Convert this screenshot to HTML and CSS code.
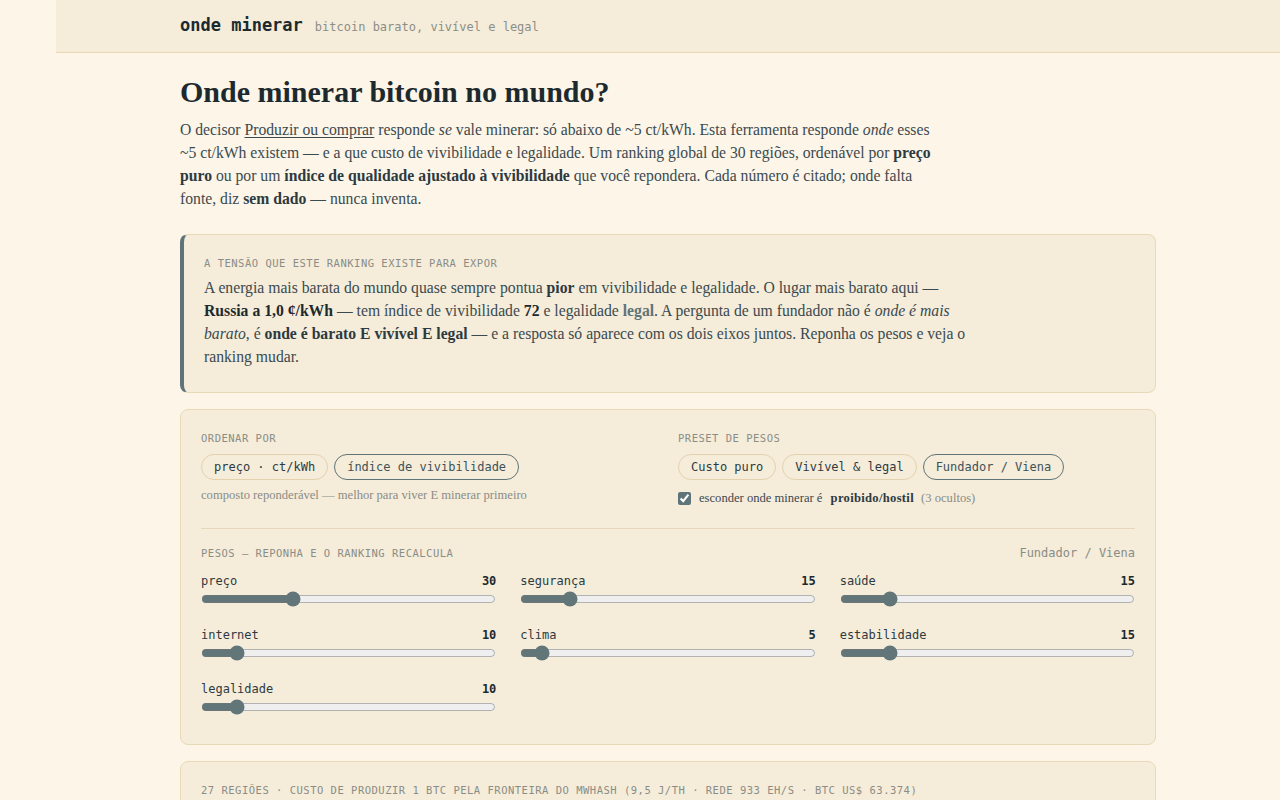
FILE: index.html
```html
<!DOCTYPE html>
<html lang="pt">
<head>
<meta charset="utf-8">
<title>onde minerar</title>
<link rel="stylesheet" href="styles.css">
</head>
<body>
<div class="shell">
  <div class="rail"></div>
  <div class="main">
    <header class="topbar">
      <div class="wrap topbar-inner">
        <span class="brand">onde minerar</span>
        <span class="tagline">bitcoin barato, vivível e legal</span>
      </div>
    </header>
    <main class="wrap content">
      <h1 class="title">Onde minerar bitcoin no mundo?</h1>
      <p class="lede">O decisor <a class="link" href="#">Produzir ou comprar</a> responde <em>se</em> vale minerar: só abaixo de ~5 ct/kWh. Esta ferramenta responde <em>onde</em> esses ~5 ct/kWh existem — e a que custo de vivibilidade e legalidade. Um ranking global de 30 regiões, ordenável por <strong>preço puro</strong> ou por um <strong>índice de qualidade ajustado à vivibilidade</strong> que você repondera. Cada número é citado; onde falta fonte, diz <strong>sem dado</strong> — nunca inventa.</p>

      <section class="callout">
        <div class="eyebrow">A tensão que este ranking existe para expor</div>
        <p class="callout-text">A energia mais barata do mundo quase sempre pontua <strong>pior</strong> em vivibilidade e legalidade. O lugar mais barato aqui — <strong class="ink">Russia a 1,0 ¢/kWh</strong> — tem índice de vivibilidade <strong class="ink">72</strong> e legalidade <strong class="slate">legal</strong>. A pergunta de um fundador não é <em>onde é mais barato</em>, é <strong>onde é barato E vivível E legal</strong> — e a resposta só aparece com os dois eixos juntos. Reponha os pesos e veja o ranking mudar.</p>
      </section>

      <section class="panel controls">
        <div class="ctrl-grid">
          <div class="ctrl-col">
            <div class="eyebrow">Ordenar por</div>
            <div class="pills">
              <button class="pill">preço · ct/kWh</button>
              <button class="pill active">índice de vivibilidade</button>
            </div>
            <div class="hint">composto reponderável — melhor para viver E minerar primeiro</div>
          </div>
          <div class="ctrl-col">
            <div class="eyebrow">Preset de pesos</div>
            <div class="pills">
              <button class="pill">Custo puro</button>
              <button class="pill">Vivível &amp; legal</button>
              <button class="pill active">Fundador / Viena</button>
            </div>
            <label class="check">
              <input type="checkbox" checked>
              <span>esconder onde minerar é <strong>proibido/hostil</strong> <span class="muted">(3 ocultos)</span></span>
            </label>
          </div>
        </div>
        <div class="divider"></div>
        <div class="weights-head">
          <div class="eyebrow">Pesos — reponha e o ranking recalcula</div>
          <div class="preset-name">Fundador / Viena</div>
        </div>
        <div class="sliders">
          <div class="slider"><div class="slider-top"><span>preço</span><b>30</b></div><input type="range" min="0" max="100" value="30"></div>
          <div class="slider"><div class="slider-top"><span>segurança</span><b>15</b></div><input type="range" min="0" max="100" value="15"></div>
          <div class="slider"><div class="slider-top"><span>saúde</span><b>15</b></div><input type="range" min="0" max="100" value="15"></div>
          <div class="slider"><div class="slider-top"><span>internet</span><b>10</b></div><input type="range" min="0" max="100" value="10"></div>
          <div class="slider"><div class="slider-top"><span>clima</span><b>5</b></div><input type="range" min="0" max="100" value="5"></div>
          <div class="slider"><div class="slider-top"><span>estabilidade</span><b>15</b></div><input type="range" min="0" max="100" value="15"></div>
          <div class="slider"><div class="slider-top"><span>legalidade</span><b>10</b></div><input type="range" min="0" max="100" value="10"></div>
        </div>
      </section>

      <section class="panel results">
        <div class="eyebrow">27 regiões · custo de produzir 1 BTC pela fronteira do MWHash (9,5 J/TH · rede 933 EH/s · BTC US$ 63.374)</div>
        <div class="results-body"></div>
      </section>
    </main>
  </div>
</div>
</body>
</html>
```

FILE: styles.css
```css
* { box-sizing: border-box; }
html, body { margin: 0; padding: 0; }
body {
  background: #fdf5e8;
  color: #3b4a4f;
  font-family: "Liberation Serif", "DejaVu Serif", serif;
}
.shell { display: flex; min-height: 100vh; }
.rail { width: 56px; flex: none; }
.main { flex: 1; min-width: 0; }
.wrap { width: 976px; margin: 0 auto; }

.topbar {
  background: #f5ecda;
  border-bottom: 1px solid #ead7b3;
  height: 53px;
}
.topbar-inner {
  display: flex;
  align-items: baseline;
  gap: 12px;
  padding-top: 15px;
}
.brand {
  font-family: "DejaVu Sans Mono", "Liberation Mono", monospace;
  font-weight: bold;
  font-size: 17px;
  color: #1c2a2f;
}
.tagline {
  font-family: "DejaVu Sans Mono", "Liberation Mono", monospace;
  font-size: 12px;
  color: #8c8f88;
}

.content { padding-top: 21px; }
.title {
  margin: 0;
  font-size: 30px;
  line-height: 36px;
  font-weight: bold;
  color: #1c2a2f;
}
.lede {
  margin: 8px 0 0;
  max-width: 760px;
  font-size: 15.7px;
  line-height: 23px;
}
.lede strong { color: #2d3a3f; }
.link { color: inherit; text-decoration: underline; text-underline-offset: 2px; }

.eyebrow {
  font-family: "DejaVu Sans Mono", "Liberation Mono", monospace;
  font-size: 10.5px;
  letter-spacing: 0.5px;
  text-transform: uppercase;
  color: #8a8c86;
  line-height: 14px;
}

.callout {
  margin-top: 24px;
  background: #f5ecda;
  border: 1px solid #ead9b9;
  border-left: 4px solid #5f7478;
  border-radius: 8px;
  padding: 21px 20px 24px;
}
.callout-text {
  margin: 6px 0 0;
  max-width: 770px;
  font-size: 15.7px;
  line-height: 23px;
}
.callout-text strong { color: #2d3a3f; }
.callout-text .ink { color: #1c2a2f; }
.callout-text .slate { color: #5f7478; }

.panel {
  background: #f5ecda;
  border: 1px solid #ead9b9;
  border-radius: 8px;
  padding: 21px 20px;
}
.controls { margin-top: 16px; padding-bottom: 26px; }
.ctrl-grid {
  display: grid;
  grid-template-columns: 1fr 1fr;
  gap: 20px;
}
.pills { display: flex; gap: 6px; margin-top: 9px; }
.pill {
  height: 26px;
  padding: 0 12px;
  border-radius: 13px;
  border: 1px solid #e4d2ae;
  background: transparent;
  font-family: "DejaVu Sans Mono", "Liberation Mono", monospace;
  font-size: 12px;
  color: #2d3a3f;
  cursor: pointer;
}
.pill.active { border-color: #5f7478; color: #3f5357; }
.hint {
  margin-top: 8px;
  font-size: 12.6px;
  color: #8a8c86;
}
.check {
  display: flex;
  align-items: center;
  gap: 8px;
  margin-top: 11px;
  font-size: 12.6px;
  color: #3b4a4f;
}
.check input {
  margin: 0;
  width: 13px;
  height: 13px;
  accent-color: #5f7478;
}
.check strong { margin-left: 5px; color: #2d3a3f; letter-spacing: 0.3px; }
.muted { color: #8a8c86; margin-left: 4px; }

.divider { height: 1px; background: #e6d7ba; margin: 22px 0 17px; }
.weights-head {
  display: flex;
  justify-content: space-between;
  align-items: baseline;
}
.preset-name {
  font-family: "DejaVu Sans Mono", "Liberation Mono", monospace;
  font-size: 12px;
  color: #8a8c86;
}
.sliders {
  margin-top: 14px;
  display: grid;
  grid-template-columns: repeat(3, 1fr);
  column-gap: 24px;
  row-gap: 18px;
}
.slider-top {
  display: flex;
  justify-content: space-between;
  font-family: "DejaVu Sans Mono", "Liberation Mono", monospace;
  font-size: 12px;
  line-height: 14px;
  color: #2d3a3f;
}
.slider-top b { color: #1c2a2f; }
.slider input {
  display: block;
  width: 100%;
  margin: 0;
  height: 22px;
  accent-color: #627679;
}

.results { margin-top: 16px; padding-top: 21px; }
.results-body { height: 200px; }
```
